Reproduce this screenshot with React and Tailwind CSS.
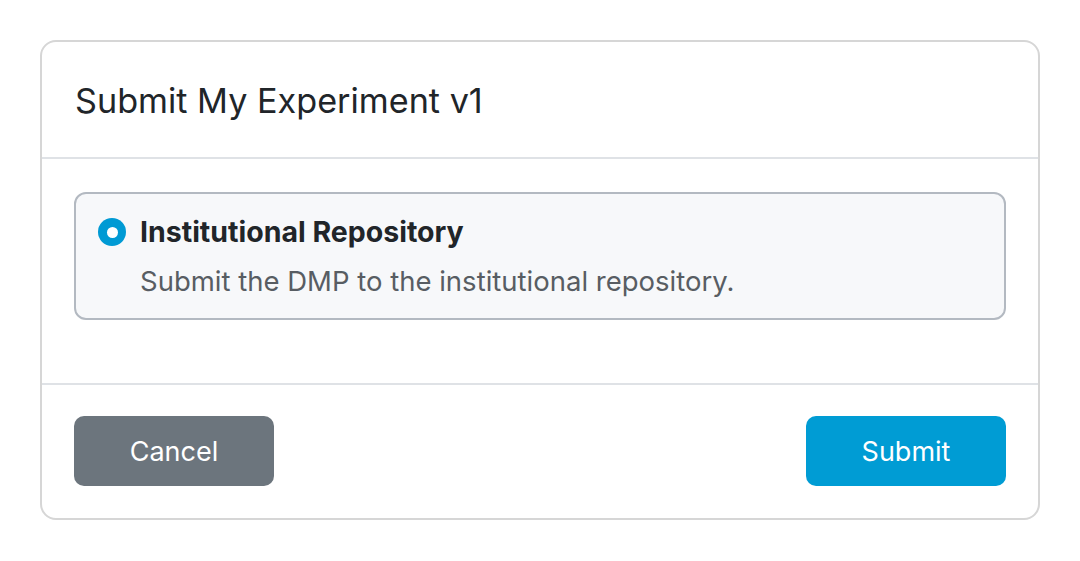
import React from 'react';

const App = () => {
  return (
    <div className="w-[1080px] h-[561px] bg-white p-[40px]" style={{ fontFamily: 'Inter, "Noto Sans", sans-serif' }}>
      <div className="w-[1000px] h-[480px] border-2 border-[#d6d6d6] rounded-[16px] flex flex-col overflow-hidden">
        {/* Header */}
        <div className="h-[117px] flex items-center px-[33px] pt-[4px] border-b-2 border-[#dfe2e6]">
          <h2 className="text-[34.2px] leading-none text-[#212529] font-normal">
            Submit My Experiment v1
          </h2>
        </div>

        {/* Body */}
        <div className="flex-1 px-[32px] pt-[33px]">
          <label className="flex flex-col h-[128px] border-2 border-[#b3b9c1] rounded-[12px] bg-[#f7f8fa] pl-[22px] pt-[21px]">
            <div className="flex items-center">
              <span className="w-[28px] h-[28px] rounded-full bg-[#009ad4] flex items-center justify-center">
                <span className="w-[11px] h-[11px] rounded-full bg-white" />
              </span>
              <span className="ml-[14px] text-[28.5px] leading-[34px] font-bold text-[#212529]">
                Institutional Repository
              </span>
            </div>
            <p className="ml-[42px] mt-[15px] text-[27.5px] leading-[34px] text-[#585d63]">
              Submit the DMP to the institutional repository.
            </p>
          </label>
        </div>

        {/* Footer */}
        <div className="flex justify-between items-center px-[32px] pt-[31px] pb-[32px] border-t-2 border-[#dfe2e6]">
          <button className="w-[200px] h-[70px] rounded-[10px] bg-[#6c757d] text-white text-[27px] pt-[2px]">
            Cancel
          </button>
          <button className="w-[200px] h-[70px] rounded-[10px] bg-[#009cd4] text-white text-[27px] pt-[2px]">
            Submit
          </button>
        </div>
      </div>
    </div>
  );
};

export default App;
